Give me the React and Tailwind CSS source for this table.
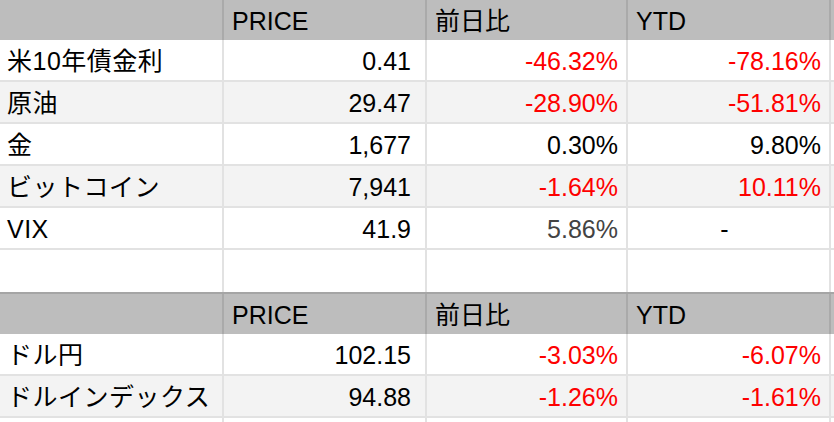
import React from 'react';

const RED = 'text-[#fe0000]';

const table1 = [
  { name: '米10年債金利', price: '0.41', day: '-46.32%', dayC: RED, ytd: '-78.16%', ytdC: RED },
  { name: '原油', price: '29.47', day: '-28.90%', dayC: RED, ytd: '-51.81%', ytdC: RED },
  { name: '金', price: '1,677', day: '0.30%', dayC: 'text-black', ytd: '9.80%', ytdC: 'text-black' },
  { name: 'ビットコイン', price: '7,941', day: '-1.64%', dayC: RED, ytd: '10.11%', ytdC: RED },
  { name: 'VIX', price: '41.9', day: '5.86%', dayC: 'text-[#434343]', ytd: '-', ytdC: 'text-black', center: true },
];

const table2 = [
  { name: 'ドル円', price: '102.15', day: '-3.03%', dayC: RED, ytd: '-6.07%', ytdC: RED },
  { name: 'ドルインデックス', price: '94.88', day: '-1.26%', dayC: RED, ytd: '-1.61%', ytdC: RED },
];

function Header({ top }) {
  return (
    <div className={`flex h-[40px] bg-[#bdbdbd] text-black ${top ? 'border-t-2 border-[#a5a5a5] h-[42px]' : ''}`}>
      <div className="w-[224px] border-r-2 border-[#aaaaaa]" />
      <div className="w-[203px] border-r-2 border-[#aaaaaa] pl-[8px] pt-[2px] flex items-center">PRICE</div>
      <div className="w-[201px] border-r-2 border-[#aaaaaa] pl-[8px] pt-[2px] flex items-center">前日比</div>
      <div className="w-[203px] border-r-2 border-[#aaaaaa] pl-[8px] pt-[2px] flex items-center">YTD</div>
      <div className="flex-1" />
    </div>
  );
}

function Row({ r, striped, dark }) {
  const bg = striped ? 'bg-[#f3f3f3]' : 'bg-white';
  const bb = dark ? 'border-b-0' : 'border-b-2 border-[#e2e2e2]';
  return (
    <div className={`flex h-[42px] ${bg} ${bb}`}>
      <div className="w-[224px] border-r-2 border-[#e2e2e2] pl-[7px] pt-[3px] flex items-center text-black whitespace-nowrap overflow-hidden tracking-[0.5px]">
        {r?.name}
      </div>
      <div className="w-[203px] border-r-2 border-[#e2e2e2] pr-[14px] pt-[3px] flex items-center justify-end text-black">
        {r?.price}
      </div>
      <div className={`w-[201px] border-r-2 border-[#e2e2e2] pr-[8px] pt-[3px] flex items-center justify-end ${r?.dayC || ''}`}>
        {r?.day}
      </div>
      <div className={`w-[203px] border-r-2 border-[#e2e2e2] pr-[8px] pt-[3px] flex items-center ${r?.center ? 'justify-center' : 'justify-end'} ${r?.ytdC || ''}`}>
        {r?.ytd}
      </div>
      <div className="flex-1" />
    </div>
  );
}

export default function App() {
  return (
    <div
      className="w-[834px] h-[422px] overflow-hidden bg-white text-[25px] leading-none"
      style={{ fontFamily: '"Liberation Sans", Arial, "Noto Sans CJK JP", sans-serif' }}
    >
      <Header />
      {table1.map((r, i) => (
        <Row key={r.name} r={r} striped={i % 2 === 1} />
      ))}
      <Row dark />
      <Header top />
      {table2.map((r, i) => (
        <Row key={r.name} r={r} striped={i % 2 === 1} />
      ))}
      <Row />
    </div>
  );
}
